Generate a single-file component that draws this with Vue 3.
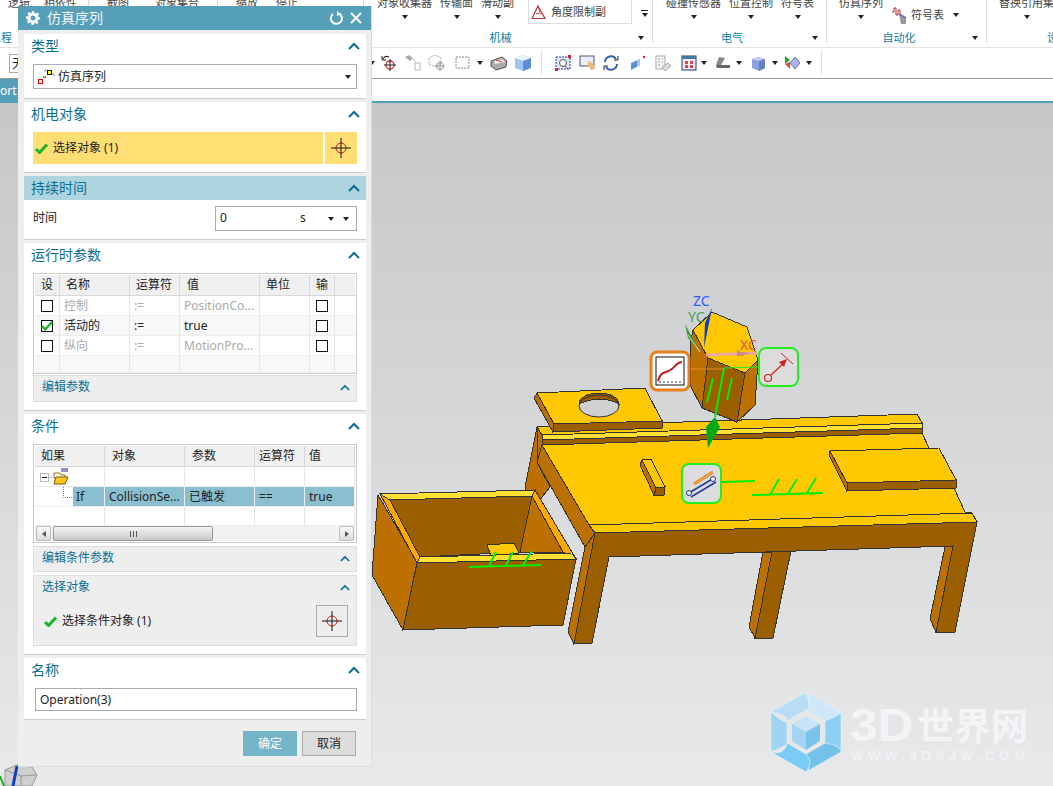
<script setup>
const params = [
  { on: false, name: '控制', op: ':=', val: 'PositionCo...', dim: true },
  { on: true, name: '活动的', op: ':=', val: 'true', dim: false },
  { on: false, name: '纵向', op: ':=', val: 'MotionPro...', dim: true },
]
const hexOuter = [[806,692],[841,712],[841,752],[806,772],[771,752],[771,712]]
const hexInner = [[806,710],[825,721],[825,743],[806,754],[787,743],[787,721]]
const shades = ['#cfe8f7','#8ed0f3','#74c2ea','#7accf5','#a0d4f2','#b8def5']
const blades = shades.map((fill, i) => {
  const j = (i + 1) % 6
  const [a, b] = hexOuter[i]
  const [c, d] = hexOuter[j]
  const [e, f] = hexInner[j]
  const [g, h] = hexInner[i]
  return { fill, d: `M${a} ${b}L${c} ${d}Q${(c + e) / 2 + 6} ${(d + f) / 2 + 8} ${e} ${f}L${g} ${h}Q${(a + g) / 2 + 8} ${(b + h) / 2 - 2} ${a} ${b}Z` }
})
</script>

<template>
  <div class="page">
    <header class="ribbon">
      <section class="rg g0">
        <div class="items"><span>逻辑</span><span>相依性</span></div>
        <div class="glabel"><b class="cut">工程</b></div>
      </section>
      <section class="rg g1">
        <div class="items"><span>截图</span><span class="wide">对象集合</span></div>
      </section>
      <section class="rg g2">
        <div class="items"><span>缩放</span><span>停止</span></div>
      </section>
      <section class="rg g3">
        <div class="items">
          <div class="it"><span>对象收集器</span><i class="caret"></i></div>
          <div class="it"><span>传输面</span><i class="caret"></i></div>
          <div class="it"><span>滑动副</span><i class="caret"></i></div>
          <div class="limit">
            <svg width="16" height="16" viewBox="0 0 16 16"><path d="M1 14.500 7 2 14 14.500Z" fill="none" stroke="#b33" stroke-width="1.200"/><path d="M7 2 9 8M5 10Q9 8 12 10" fill="none" stroke="#c44"/></svg>
            <span>角度限制副</span>
          </div>
          <div class="more"><i class="dash"></i><i class="caret"></i></div>
        </div>
        <div class="glabel"><b>机械</b><i class="caret corner"></i></div>
      </section>
      <section class="rg g4">
        <div class="items">
          <div class="it"><span>碰撞传感器</span><i class="caret"></i></div>
          <div class="it"><span>位置控制</span><i class="caret"></i></div>
          <div class="it"><span>符号表</span><i class="caret"></i></div>
        </div>
        <div class="glabel"><b>电气</b><i class="caret corner"></i></div>
      </section>
      <section class="rg g5">
        <div class="items">
          <div class="it"><span>仿真序列</span><i class="caret"></i></div>
          <div class="sym">
            <svg width="16" height="18" viewBox="0 0 16 18"><path d="M0 6h2V2h2v7h2V4h2v5h2" fill="none" stroke="#a33"/><path d="M7 8l7 4v6H9z" fill="#999"/><path d="M7 8l7 4" stroke="#86c" stroke-width="2"/></svg>
            <span>符号表</span>
            <i class="caret"></i>
          </div>
        </div>
        <div class="glabel"><b>自动化</b><i class="caret corner"></i></div>
      </section>
      <section class="rg g6">
        <div class="items"><div class="it"><span class="nowrap">替换引用集</span><i class="caret"></i></div></div>
        <div class="glabel end"><b class="nowrap">设计</b></div>
      </section>
    </header>

    <nav class="toolbar">
      <div class="filter">无</div>
      <i class="caret cs"></i>
      <span class="tb"><svg width="16" height="18" viewBox="0 0 16 18"><circle cx="9" cy="11" r="4" fill="none" stroke="#d22" stroke-width="1.300"/><path d="M9 5v12M3 11h12" stroke="#222"/><path d="M2 5Q4 1 8 3" fill="none" stroke="#222" stroke-width="1.300"/><path d="M1 2v4h4" fill="none" stroke="#222"/></svg></span>
      <span class="tb"><svg width="18" height="18" viewBox="0 0 18 18"><path d="M1 3l4-2 4 3-3 3z" fill="#aaa"/><rect x="11" y="9" width="5" height="7" fill="none" stroke="#bbb"/><path d="M9 5l3 4" stroke="#bbb"/></svg></span>
      <span class="tb"><svg width="18" height="18" viewBox="0 0 18 18"><path d="M7 1l6 3v6l-6 3-6-3V4z" fill="none" stroke="#aaa" stroke-dasharray="2 1"/><circle cx="12" cy="12" r="3.500" fill="none" stroke="#999"/><path d="M12 7v10M7 12h10" stroke="#999"/></svg></span>
      <span class="tb m2"><svg width="16" height="16" viewBox="0 0 16 16"><rect x="1" y="2" width="13" height="11" fill="none" stroke="#888" stroke-dasharray="2 1"/></svg></span>
      <i class="caret cs"></i>
      <span class="tb m2"><svg width="18" height="16" viewBox="0 0 18 16"><path d="M1 6l11-4 5 4-1 6-10 3-5-4z" fill="#aaa" stroke="#555"/><path d="M4 6l8-2 3 3-10 2z" fill="#eee"/><path d="M6 5l6 2" stroke="#d33"/></svg></span>
      <span class="tb"><svg width="18" height="18" viewBox="0 0 18 18"><path d="M1 4l8-3 8 3v10l-8 3-8-3z" fill="#9cc6f0"/><path d="M1 4l8 3 8-3-8-3z" fill="#e8f4ff"/><path d="M9 7v10l8-3V4z" fill="#5c8fd8"/></svg></span>
      <i class="vsep"></i>
      <span class="tb"><svg width="16" height="16" viewBox="0 0 16 16"><rect x="1" y="2" width="14" height="12" fill="#dfe6f5" stroke="#33a" stroke-dasharray="2 1"/><circle cx="8" cy="8" r="3.500" fill="#fff" stroke="#555"/><path d="M10 11l3 3" stroke="#555"/><rect x="0" y="13" width="3" height="3" fill="#d22"/><rect x="13" y="0" width="3" height="3" fill="#d22"/></svg></span>
      <span class="tb"><svg width="17" height="16" viewBox="0 0 17 16"><rect x="1" y="1" width="14" height="10" fill="#e8eefa" stroke="#556"/><path d="M9 6l3 1 3 3 1 4-4 1-3-4z" fill="#e5bb80"/></svg></span>
      <span class="tb"><svg width="16" height="16" viewBox="0 0 16 16"><path d="M13 4A6 6 0 0 0 2 7M3 12a6 6 0 0 0 11-3" fill="none" stroke="#36a" stroke-width="2"/><path d="M11 5h4V1M5 11H1v4" fill="none" stroke="#223" stroke-width="1"/></svg></span>
      <span class="tb m3"><svg width="16" height="16" viewBox="0 0 16 16"><path d="M1 8l9-4v6l-9 5z" fill="#5c8fd8"/><path d="M7 5l3-1v6l-3 2z" fill="#a8c8f0"/><circle cx="14" cy="2" r="1.200" fill="#d22"/></svg></span>
      <span class="tb"><svg width="17" height="17" viewBox="0 0 17 17"><rect x="2" y="1" width="9" height="13" fill="#f4f4f4" stroke="#aaa"/><path d="M4 4h2M4 7h2M4 10h2M8 4h1M8 7h1" stroke="#999"/><path d="M8 12l6-4 3 3-6 5z" fill="#ddd" stroke="#aaa"/></svg></span>
      <span class="tb m3"><svg width="16" height="16" viewBox="0 0 16 16"><rect x="1" y="1" width="14" height="14" fill="#e8eefa" stroke="#336"/><rect x="1" y="1" width="14" height="3" fill="#47a"/><path d="M4 6h3v3H4zM9 6h3v3H9zM4 10h3v3H4zM9 10h3v3H9z" fill="#d44"/></svg></span>
      <i class="caret cs ml0"></i>
      <span class="tb m2"><svg width="16" height="14" viewBox="0 0 16 14"><path d="M4 1l6 1-4 7H1z" fill="#888"/><path d="M1 9h14v3H2z" fill="#666"/></svg></span>
      <i class="caret cs ml1"></i>
      <span class="tb m2"><svg width="15" height="15" viewBox="0 0 15 15"><path d="M1 3l6-2 7 2v9l-6 3-7-3z" fill="#8ea0e0"/><path d="M1 3l7 2 6-2-7-2z" fill="#c3cdf2"/><path d="M8 5v10l6-3V3z" fill="#6a7ec8"/></svg></span>
      <i class="caret cs"></i>
      <span class="tb"><svg width="16" height="14" viewBox="0 0 16 14"><path d="M1 0l5 4-5 4z" fill="#2a2"/><path d="M1 8l5-2v7z" fill="#d44"/><path d="M6 7l5-6 5 6-5 6z" fill="#aab4e8" stroke="#778"/></svg></span>
      <i class="caret cs"></i>
      <i class="vsep s2"></i>
    </nav>

    <div class="blank"></div>

    <main class="viewport">
      <div class="tab">ort</div>
      <svg class="scene" viewBox="0 103 1053 683" xmlns="http://www.w3.org/2000/svg">
        <!-- watermark -->
        <g>
          <path v-for="(b, i) in blades" :key="i" :d="b.d" :fill="b.fill" stroke="#e8f3fa" stroke-width=".6"/>
          <path d="M806 710 825 721V743L806 754 787 743V721Z" fill="#e6e7e9"/>
          <path d="M806 716 820 724 806 732 792 724Z" fill="#c6e4f6"/>
          <path d="M792 724 806 732V750L792 741Z" fill="#a2d5f3"/>
          <path d="M820 724 806 732V750L820 741Z" fill="#7ac3ea"/>
          <text x="850" y="741" class="wm wm1" textLength="63" lengthAdjust="spacingAndGlyphs">3D</text>
          <text x="917" y="740" class="wm wm2">世界网</text>
          <text x="851" y="760" class="wm wm3" textLength="174">WWW.3DSJW.COM</text>
        </g>

        <g class="solid">
          <!-- back left leg -->
          <path d="M537 427 525 487 532 510 550 487 537 462 542 445Z" class="side"/>

          <!-- table -->
          <path d="M542 445 922 433 929 448 955 490 965 512 972 513 977 522 595 533 589 525Z" class="top"/>
          <path d="M542 445 589 525 595 533 585 547 537 462Z" class="side"/>
          <path d="M537 427 917 414 922 423 542 435Z" class="top"/>
          <path d="M542 435 922 423 922 428 542 440Z" class="lite"/>
          <path d="M542 440 922 428 922 433 542 445Z" class="dark"/>
          <path d="M589 525 972 513 977 522 595 533Z" class="top"/>
          <path d="M537 427 542 435 542 445 537 462Z" class="side"/>

          <!-- apron and front legs -->
          <path d="M763 552 772 552 755 638 749 627Z" class="side"/>
          <path d="M772 552 791 551 773 638 755 638Z" class="dark"/>
          <path d="M945 547 953 546 936 632 930 619Z" class="side"/>
          <path d="M595 533 977 522 955 632 936 632 953 546 609 557 592 643 574 644Z" class="dark"/>
          <path d="M585 547 595 533 574 644 568 632Z" class="side"/>

          <!-- right block -->
          <path d="M829 455 830 451 847 483 847 491Z" class="side"/>
          <path d="M830 451 939 448 956 480 847 483Z" class="top"/>
          <path d="M847 483 956 480 956 488 847 491Z" class="dark"/>

          <!-- pin -->
          <path d="M640 465 642 460 656 488 654 495Z" class="side"/>
          <path d="M642 460 651 459 665 487 656 488Z" class="top"/>
          <path d="M656 488 665 487 664 495 654 495Z" class="dark"/>

          <!-- plate with the hole -->
          <path d="M534 398 537 393 554 424 553 432Z" class="side"/>
          <path d="M537 393 645 388 662 421 554 424Z" class="top"/>
          <path d="M554 424 662 421 662 428 553 432Z" class="dark"/>
          <ellipse cx="599" cy="406" rx="20" ry="11" fill="#cfd0d2"/>
          <path d="M579 404A20 11 0 0 1 619 404Q600 394 579 404Z" class="dark"/>
          <ellipse cx="599" cy="406" rx="20" ry="11" fill="none" stroke="#333"/>

          <!-- box -->
          <path d="M378 495 417 562 403 630 372 575Z" class="side"/>
          <path d="M390 500 532 496 520 552 420 557Z" class="dark"/>
          <path d="M532 496 563 552 520 552Z" class="side"/>
          <path d="M487 545 514 543 519 553 491 556Z" class="top"/>
          <path d="M380 494 535 490 532 496 390 500Z" class="lite"/>
          <path d="M380 494 390 500 420 557 417 563Z" fill="#ffa800"/>
          <path d="M535 490 576 559 563 552 532 496Z" fill="#ffa800"/>
          <path d="M417 563 576 559 563 625 403 630Z" class="dark"/>
          <path d="M420 557 572 553 576 559 417 563Z" class="lite"/>

          <!-- hexagonal head -->
          <path d="M690 345 693 330 708 358 702 408 690 385Z" class="side"/>
          <path d="M712 312 747 327 758 360 745 373 708 358 693 330Z" class="top"/>
          <path d="M708 358 745 373 737 422 702 408Z" class="dark"/>
          <path d="M745 373 758 360 755 405 737 422Z" class="side"/>
        </g>

        <!-- green sensor marks -->
        <g class="mark">
          <path d="M469 567 541 565M489 566 496 552M506 565 513 552M523 565 532 551"/>
          <path d="M752 495 823 493M770 495 779 479M788 494 797 479M807 493 816 478"/>
          <path d="M722 482 755 481"/>
          <path d="M713 378 707 402M732 378 727 400M724 368 715 417"/>
        </g>
        <path d="M715 417 720 427 708 448 706 427Z" fill="#00a812"/>
        <path d="M690 369H724" stroke="#ee8833" fill="none"/>
        <path d="M724 368 758 367" stroke="#22ee22" fill="none"/>

        <!-- csys -->
        <path d="M712 308 704 348 705 323Z" fill="#1040c0"/>
        <path d="M685 324 700 352 688 338Z" fill="#3a9a3a"/>
        <path d="M700 352 688 335" stroke="#bde5bd"/>
        <path d="M706 355 757 353" stroke="#e8a8a0" stroke-width="3"/>
        <path d="M737 350 741 352 750 353 741 356 737 356Z" fill="#c88"/>
        <text x="693" y="306" class="axis zc">ZC</text>
        <text x="688" y="322" class="axis yc">YC</text>
        <text x="740" y="350" class="axis xc">XC</text>

        <!-- handles -->
        <g>
          <rect x="651" y="352" width="38" height="38" rx="6" fill="#fff" stroke="#e8801c" stroke-width="3"/>
          <rect x="656" y="357" width="28" height="28" fill="#fff" stroke="#111"/>
          <path d="M658 381Q660 373 666 372 672 370 676 365 679 362 682 362" fill="none" stroke="#b81818" stroke-width="2"/>
          <path d="M660 383v-2M664 383v-2M668 383v-2M672 383v-2M676 383v-2M680 383v-2" stroke="#333"/>
        </g>
        <g>
          <rect x="759" y="348" width="39" height="38" rx="7" fill="#dcdcdc" stroke="#22ee22" stroke-width="2"/>
          <circle cx="768" cy="378" r="3.500" fill="none" stroke="#c22" stroke-width="1.200"/>
          <path d="M771 375 785 362" stroke="#c22" stroke-width="1.200"/>
          <path d="M787 359 779 362 784 367Z" fill="#c22"/>
          <path d="M781 353 793 364" stroke="#c22"/>
        </g>
        <g>
          <rect x="682" y="464" width="39" height="39" rx="7" fill="#dcdcdc" stroke="#22ee22" stroke-width="2"/>
          <path d="M689 493 714 478" stroke="#223a99" stroke-width="1.500"/>
          <path d="M691 497 716 482" stroke="#223a99" stroke-width="1.500"/>
          <circle cx="689" cy="493" r="2.500" fill="#eee" stroke="#223a99"/>
          <circle cx="713" cy="479" r="2.500" fill="#eee" stroke="#223a99"/>
          <path d="M694 484 713 472" stroke="#e07818" stroke-width="3"/>
          <path d="M694 484 713 472" stroke="#ffc860"/>
        </g>

        <!-- view triad -->
        <path d="M5 770 17 765 32 767 37 775 32 786H5Z" fill="#cfcfcf" stroke="#999"/>
        <path d="M5 770 21 776 37 775M21 776V786" fill="none" stroke="#999"/>
        <path d="M17 766 13 786" stroke="#1040c0" stroke-width="3"/>
        <path d="M0 776 4 786" stroke="#2a2" stroke-width="2"/>
      </svg>

      <aside class="dialog">
        <div class="title">
          <svg width="14" height="14" viewBox="0 0 14 14"><path d="M6 0h2l.4 2 1.400.6L11.500 1.500 13 3l-1 1.700.5 1.300 1.500.4v2l-2 .4-.6 1.400L12.500 11.500 11 13l-1.700-1-1.300.5L7.600 14h-2l-.4-2-1.400-.6L2.500 12.500 1 11l1-1.700L1.500 8 0 7.600v-2l2-.4.6-1.400L1.500 2.500 3 1l1.700 1L6 1.500Z" fill="#fff"/><circle cx="7" cy="7" r="2.500" fill="#559fb9"/></svg>
          <span class="ttext">仿真序列</span>
          <svg class="reset" width="14" height="14" viewBox="0 0 14 14"><path d="M4 3A5.500 5.500 0 1 0 10 2.500" fill="none" stroke="#fff" stroke-width="2"/><path d="M8 0v5.500l3-3Z" fill="#fff"/></svg>
          <svg width="12" height="12" viewBox="0 0 12 12"><path d="M1 1 11 11M11 1 1 11" stroke="#fff" stroke-width="2"/></svg>
        </div>

        <section class="sec">
          <div class="sh"><span>类型</span><svg class="chev" viewBox="0 0 12 8"><path d="M1 7 6 2l5 5" /></svg></div>
          <div class="combo type">
            <svg width="18" height="16" viewBox="0 0 18 16"><rect x="1.500" y="10.500" width="4" height="4" fill="#fff" stroke="#e00"/><rect x="10.500" y="1.500" width="4" height="4" fill="#ff0" stroke="#111"/><rect x="6" y="7" width="3" height="2" fill="#e70"/><path d="M8 3V1h2M15 5h2v2" fill="none" stroke="#99a"/></svg>
            <span>仿真序列</span>
            <i class="caret end-c"></i>
          </div>
        </section>

        <section class="sec">
          <div class="sh"><span>机电对象</span><svg class="chev" viewBox="0 0 12 8"><path d="M1 7 6 2l5 5" /></svg></div>
          <div class="pick">
            <div class="pick-l">
              <svg class="ck" width="13" height="11" viewBox="0 0 13 11"><path d="M1 6 4.500 9.500 12 1.500" fill="none" stroke="#1bb52c" stroke-width="3"/></svg>
              <span>选择对象 (1)</span>
            </div>
            <div class="pick-r">
              <svg width="20" height="20" viewBox="0 0 20 20"><circle cx="10" cy="10" r="5" fill="none" stroke="#e01818"/><path d="M10 0v20M0 10h20" stroke="#111"/></svg>
            </div>
          </div>
        </section>

        <section class="sec">
          <div class="sh active"><span>持续时间</span><svg class="chev" viewBox="0 0 12 8"><path d="M1 7 6 2l5 5" /></svg></div>
          <div class="time">
            <span>时间</span>
            <div class="combo tc">
              <span class="zero">0</span><span class="unit">s</span>
              <i class="caret"></i><i class="caret tc2"></i>
            </div>
          </div>
        </section>

        <section class="sec">
          <div class="sh"><span>运行时参数</span><svg class="chev" viewBox="0 0 12 8"><path d="M1 7 6 2l5 5" /></svg></div>
          <div class="tbl t1">
            <div class="row head"><div>设</div><div>名称</div><div>运算符</div><div>值</div><div>单位</div><div>输</div><div></div></div>
            <div v-for="(p, i) in params" :key="p.name" class="row" :class="{ dim: p.dim, alt: i === 1 }">
              <div class="cc"><span class="box"><svg v-if="p.on" width="12" height="10" viewBox="0 0 12 10"><path d="M1 5 4.200 8.500 11 1" fill="none" stroke="#1bb52c" stroke-width="2.400"/></svg></span></div>
              <div>{{ p.name }}</div><div>{{ p.op }}</div><div>{{ p.val }}</div><div></div>
              <div class="cc"><span class="box"></span></div><div></div>
            </div>
            <div class="row last"><div></div><div></div><div></div><div></div><div></div><div></div><div></div></div>
          </div>
          <div class="sub collapsed"><span>编辑参数</span><svg class="chev s" viewBox="0 0 12 8"><path d="M1 7 6 2l5 5" /></svg></div>
        </section>

        <section class="sec">
          <div class="sh"><span>条件</span><svg class="chev" viewBox="0 0 12 8"><path d="M1 7 6 2l5 5" /></svg></div>
          <div class="tbl t2">
            <div class="row head"><div>如果</div><div>对象</div><div>参数</div><div>运算符</div><div>值</div></div>
            <div class="row">
              <div class="tree">
                <svg width="34" height="20" viewBox="0 0 34 20"><rect x="5.500" y="6.500" width="8" height="8" fill="#fff" stroke="#bbb"/><path d="M7 10.500h5" stroke="#111"/><path d="M14 10.500h4" stroke="#999" stroke-dasharray="1 1"/><path d="M19 8V6h6l1 2h4v3h-11z" fill="#fff" stroke="#a07000"/><path d="M19 17l2-7h12l-3 7z" fill="#ffc820" stroke="#805800"/><path d="M26 2h7M26 4h7" stroke="#22228a"/></svg>
              </div><div></div><div></div><div></div><div></div>
            </div>
            <div class="row sel">
              <div class="ifc"><svg width="12" height="12" viewBox="0 0 12 12"><path d="M1.500 0V10.500H12" fill="none" stroke="#888" stroke-dasharray="1 1"/></svg><b>If</b></div>
              <div>CollisionSe...</div><div>已触发</div><div>==</div><div>true</div>
            </div>
            <div class="row r3"><div></div><div></div><div></div><div></div><div></div></div>
            <div class="scroll">
              <span class="sb"><i class="tri l"></i></span>
              <span class="thumb"><em></em></span>
              <span class="sb right"><i class="tri r"></i></span>
            </div>
          </div>
          <div class="sub s2c"><span>编辑条件参数</span><svg class="chev s" viewBox="0 0 12 8"><path d="M1 7 6 2l5 5" /></svg></div>
          <div class="sub open">
            <div class="subh"><span>选择对象</span><svg class="chev s" viewBox="0 0 12 8"><path d="M1 7 6 2l5 5" /></svg></div>
            <div class="subb">
              <svg width="13" height="11" viewBox="0 0 13 11"><path d="M1 6 4.500 9.500 12 1.500" fill="none" stroke="#1bb52c" stroke-width="3"/></svg>
              <span>选择条件对象 (1)</span>
              <div class="cross"><svg width="20" height="20" viewBox="0 0 20 20"><circle cx="10" cy="10" r="5" fill="none" stroke="#e01818"/><path d="M10 0v20M0 10h20" stroke="#111"/></svg></div>
            </div>
          </div>
        </section>

        <section class="sec">
          <div class="sh"><span>名称</span><svg class="chev" viewBox="0 0 12 8"><path d="M1 7 6 2l5 5" /></svg></div>
          <div class="input">Operation(3)</div>
        </section>

        <div class="actions">
          <div class="btn ok">确定</div>
          <div class="btn">取消</div>
        </div>
      </aside>
    </main>
  </div>
</template>

<style>
html, body { margin: 0; background: #fff; }
</style>

<style scoped>
.page {
  width: 1053px; height: 786px; overflow: hidden; position: relative;
  display: flex; flex-direction: column;
  font: 12px/1.2 "Noto Sans", "Noto Sans CJK SC", sans-serif; color: #222;
}
i { display: block; font-style: normal; }
.caret { width: 0; height: 0; border-style: solid; border-color: #222 transparent transparent; border-width: 4px 3.5px 0; flex: none; }

/* ribbon */
.ribbon { height: 47px; flex: none; box-sizing: content-box; display: flex; align-items: flex-start; overflow: hidden; border-bottom: 1px solid #e3e3e3; background: #fff; font-size: 11px; color: #444; }
.rg { height: 43px; flex: none; box-sizing: border-box; border-right: 1px solid #ddd; display: flex; flex-direction: column; justify-content: space-between; }
.g0 { width: 89px; }
.g1 { width: 129px; }
.g2 { width: 146px; }
.g3 { width: 289px; }
.g4 { width: 174px; }
.g5 { width: 160px; }
.g6 { width: 66px; border-right: 0; }
.items { display: flex; gap: 8px; margin-top: -4px; height: 30px; white-space: nowrap; line-height: 14px; }
.g0 .items { padding-left: 8px; gap: 14px; }
.g1 .items { padding-left: 18px; gap: 26px; }
.g2 .items { padding-left: 18px; gap: 18px; }
.g3 .items { padding-left: 13px; align-items: flex-start; }
.g4 .items { padding-left: 13px; }
.g5 .items { padding-left: 12px; gap: 10px; }
.g6 .items { padding-left: 12px; }
.it { display: flex; flex-direction: column; align-items: center; }
.it .caret { margin-top: 5px; }
.limit { margin-left: 6px; width: 104px; height: 28px; box-sizing: border-box; border: 1px solid #ddd; border-top: 0; padding: 5px 0 0 2px; display: flex; align-items: center; gap: 4px; }
.more { display: flex; flex-direction: column; gap: 2px; align-items: center; margin: 14px 0 0 1px; }
.dash { width: 7px; height: 1px; background: #222; }
.sym { display: flex; align-items: center; gap: 3px; padding-top: 7px; margin-left: -1px; }
.sym .caret { margin-left: 6px; }
.glabel { display: flex; align-items: center; height: 16px; margin-bottom: -3px; padding-right: 8px; color: #0a7fa5; }
.glabel b { flex: 1; text-align: center; font-weight: 400; }
.corner { margin-left: 1px; }
.g0 .glabel b.cut { flex: none; margin-left: -10px; }
.glabel.end { padding-left: 60px; padding-right: 0; }
.glabel.end b { flex: none; }
.nowrap { white-space: nowrap; }

/* toolbar */
.toolbar { height: 31px; flex: none; box-sizing: border-box; border-bottom: 1px solid #999; display: flex; align-items: center; padding-left: 9px; background: #fff; }
.filter { width: 350px; height: 19px; box-sizing: border-box; border: 1px solid #aaa; padding-left: 2px; line-height: 17px; margin-right: 8px; }
.cs { margin: 0 2px; }
.cs.ml0 { margin-left: 0; }
.cs.ml1 { margin-left: 1px; }
.tb { width: 24px; height: 24px; flex: none; display: flex; align-items: center; justify-content: center; }
.m2 { margin-left: 2px; }
.m3 { margin-left: 3px; }
.vsep { width: 1px; height: 24px; background: #ddd; margin: 0 9px 0 6px; }
.vsep.s2 { margin-left: 7px; }

.blank { height: 22px; flex: none; background: #fff; }

/* viewport */
.viewport { flex: 1; position: relative; border-top: 2px solid #559fb9; background: linear-gradient(#c6c7c9, #e8e9eb); }
.tab { position: absolute; left: 0; top: -24px; width: 18px; height: 24px; background: #559fb9; color: #fff; line-height: 24px; font-size: 12px; }
.scene { position: absolute; left: 0; top: 0; width: 1053px; height: 683px; }
.solid path { stroke: #333; stroke-width: 1; shape-rendering: crispEdges; }
.top { fill: #ffc800; }
.lite { fill: #ffe033; }
.side { fill: #bb7000; }
.dark { fill: #9c5f00; }
.mark path { stroke: #00ee00; stroke-width: 2; fill: none; }
.axis { font: 14px "Noto Sans", sans-serif; }
.zc { fill: #2a5bff; }
.yc { fill: #4a9a50; }
.xc { fill: #e05838; }
.wm { fill: #f3f4f6; font-family: "Liberation Sans", "Noto Sans CJK SC", sans-serif; font-weight: 700; }
.wm1 { font-size: 46px; }
.wm2 { font-size: 37px; font-family: "Noto Sans CJK SC", sans-serif; }
.wm3 { font-size: 13px; fill: #f1f2f4; }

/* dialog */
.dialog { position: absolute; left: 18px; top: -97px; width: 354px; height: 761px; box-sizing: border-box; background: #eeeeef; border-right: 1px solid #dcdcdc; border-bottom: 1px solid #dcdcdc; padding: 0 5px 0 6px; display: flex; flex-direction: column; }
.title { height: 24px; flex: none; margin: 0 -5px 4px -6px; padding: 0 9px 0 8px; background: #559fb9; color: #fff; display: flex; align-items: center; font-size: 14px; }
.ttext { flex: 1; margin-left: 7px; opacity: .92; }
.reset { margin-right: 7px; }
.sec { background: #fff; border-bottom: 1px solid #ccc; margin-bottom: 3px; flex: none; }
.sh { height: 24px; padding: 0 6px 0 7px; display: flex; align-items: center; justify-content: space-between; font-size: 14px; color: #0a6f95; }
.sh span { padding-top: 1px; }
.sh.active { background: #aed4df; }
.chev { width: 12px; height: 8px; flex: none; fill: none; stroke: #0a6f95; stroke-width: 2; }
.chev.s { width: 10px; height: 7px; }

.combo { box-sizing: border-box; height: 25px; border: 1px solid #aaa; display: flex; align-items: center; background: #fff; }
.type { margin: 6px 9px 9px; padding-left: 3px; gap: 3px; }
.type span { padding-top: 1px; }
.end-c { margin-left: auto; margin-right: 5px; }

.pick { display: flex; gap: 2px; margin: 6px 9px 8px; height: 32px; }
.pick-l { flex: 1; background: #ffdf73; display: flex; align-items: center; gap: 5px; padding: 1px 0 0 2px; box-sizing: border-box; }
.pick-r { width: 32px; background: #ffdf73; display: flex; align-items: center; justify-content: center; }

.time { display: flex; justify-content: space-between; padding: 6px 9px 8px; }
.time > span { padding-top: 5px; }
.tc { width: 142px; padding-left: 4px; }
.unit { margin-left: 73px; margin-right: 22px; font-size: 12px; }
.tc2 { margin-left: 9px; }

.tbl { margin: 6px 9px 0; border: 1px solid #ccc; padding: 1px 1px 0; box-sizing: border-box; overflow: hidden; }
.row { display: grid; height: 20px; }
.row > div { border-right: 1px solid #e6e6e6; border-bottom: 1px solid #eee; padding-left: 4px; line-height: 19px; white-space: nowrap; overflow: hidden; box-sizing: border-box; }
.t1 { height: 101px; margin-top: 6px; }
.t1 .row { grid-template-columns: 25px 70px 50px 80px 50px 25px 22px; }
.t1 .row > div:nth-child(1) { padding-left: 0; }
.t1 .head > div:nth-child(1), .t1 .head > div:nth-child(6) { text-align: center; padding: 0; }
.t1 .head > div:nth-child(2) { padding-left: 6px; }
.t1 .head > div:nth-child(3), .t1 .head > div:nth-child(5) { padding-left: 6px; }
.t1 .head > div:nth-child(4) { padding-left: 7px; }
.row.head { height: 21px; background: #f0f0f0; }
.row.head > div { border-right: 1px solid #d8d8d8; border-bottom: 1px solid #d8d8d8; line-height: 20px; }
.row.alt { background: #f8f8f8; }
.row.dim { color: #aaa; }
.row.last { height: 17px; background: #f8f8f8; }
.cc { display: flex; align-items: center; justify-content: center; padding: 0 !important; }
.box { width: 10px; height: 10px; border: 1px solid #111; background: #fff; display: flex; align-items: center; justify-content: center; }
.box svg { flex: none; }
.sub { margin: 1px 9px 0; border: 1px solid #ddd; background: #eee; color: #0a6f95; box-sizing: border-box; }
.collapsed { height: 27px; margin-bottom: 8px; display: flex; justify-content: space-between; align-items: center; padding: 0 6px 3px 8px; }
.s2c { height: 26px; display: flex; justify-content: space-between; align-items: center; padding: 0 6px 2px 8px; margin-top: 3px; }
.open { height: 71px; margin-top: 3px; margin-bottom: 8px; }
.subh { height: 22px; display: flex; justify-content: space-between; align-items: center; padding: 1px 6px 0 8px; box-sizing: border-box; }
.subb { display: flex; align-items: center; color: #222; padding: 7px 8px 0 10px; }
.subb span { margin-left: 5px; }
.cross { margin-left: auto; width: 32px; height: 32px; box-sizing: border-box; border: 1px solid #aaa; display: flex; align-items: center; justify-content: center; }

.t2 { height: 99px; margin-top: 6px; }
.t2 .row { grid-template-columns: 70px 80px 70px 50px 50px; }
.t2 .row > div { padding-left: 4px; }
.t2 .head { height: 21px; }
.t2 .head > div:nth-child(1) { padding-left: 6px; }
.t2 .head > div:nth-child(2), .t2 .head > div:nth-child(3) { padding-left: 7px; }
.t2 .row > div.tree { padding: 0; }
.tree svg { display: block; }
.row.sel > div { background: #8abfd0; border-right: 1px solid #eee; }
.row.sel > div.ifc { background: linear-gradient(90deg, #fff 38px, #8abfd0 38px); padding-left: 27px; display: flex; gap: 0; }
.ifc svg { flex: none; }
.ifc b { font-weight: 400; margin-left: 2px; }
.row.r3 { height: 19px; }
.scroll { height: 15px; display: flex; align-items: stretch; background: #f2f2f2; padding: 0 1px; margin-top: 0; }
.sb { width: 15px; box-sizing: border-box; border: 1px solid #bbb; border-radius: 2px; background: linear-gradient(#fafafa, #ddd); display: flex; align-items: center; justify-content: center; flex: none; }
.sb.right { margin-left: auto; }
.tri { width: 0; height: 0; border: 3px solid transparent; }
.tri.l { border-right: 4px solid #555; border-left: 0; }
.tri.r { border-left: 4px solid #555; border-right: 0; }
.thumb { width: 160px; margin-left: 2px; box-sizing: border-box; border: 1px solid #999; border-radius: 2px; background: linear-gradient(#f4f4f4, #c8c8c8); display: flex; align-items: center; justify-content: center; }
.thumb em { width: 7px; height: 6px; background: repeating-linear-gradient(90deg, #555 0 1px, transparent 1px 3px); }

.input { margin: 6px 9px 8px 11px; height: 23px; box-sizing: border-box; border: 1px solid #aaa; padding-left: 4px; line-height: 21px; }

.actions { display: flex; justify-content: flex-end; gap: 5px; padding: 8px 10px 0 0; }
.btn { width: 54px; height: 25px; box-sizing: border-box; border: 1px solid #aaa; background: #dcdcdc; text-align: center; line-height: 23px; }
.btn.ok { background: #73b4c9; border-color: #73b4c9; color: #fff; }
</style>
